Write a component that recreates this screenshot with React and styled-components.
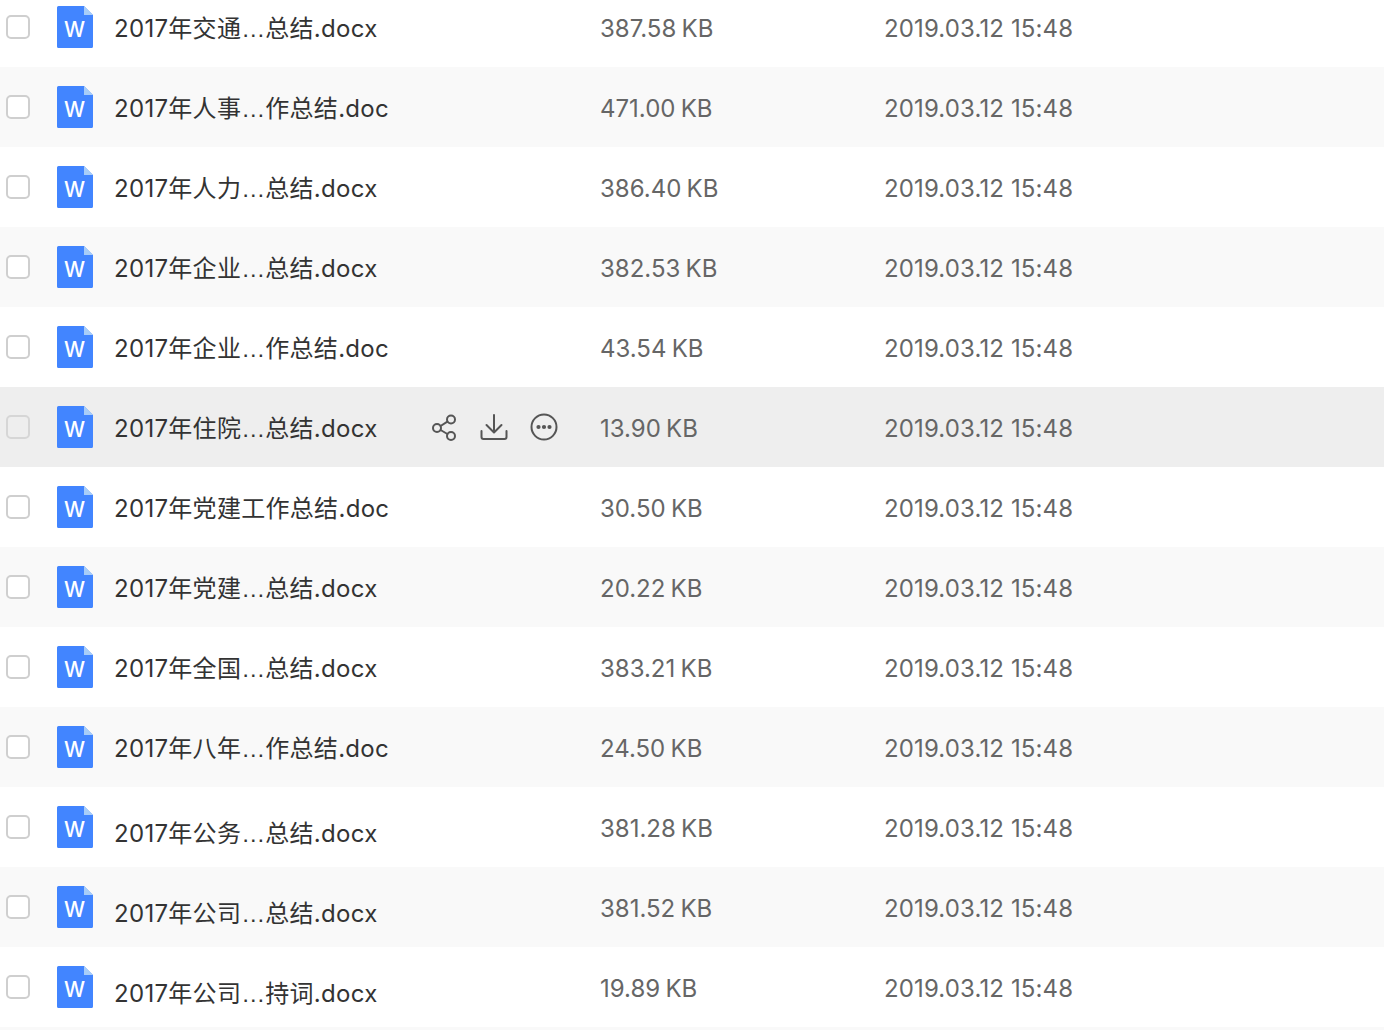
import React from "react";
import styled, { createGlobalStyle } from "styled-components";

const Global = createGlobalStyle`
  html, body { margin: 0; padding: 0; background: #fff; height: 1030px; overflow: hidden; }
  body { font-family: Inter, "Noto Sans CJK SC", "Noto Sans", sans-serif; }
`;

const List = styled.ul`
  list-style: none;
  margin: -13px 0 0;
  padding: 0;
`;

const Row = styled.li`
  height: 80px;
  padding-left: 6px;
  display: grid;
  grid-template-columns: 51px 57px 316px 170px 284px 1fr;
  align-items: center;
  background: ${(p) => (p.$hover ? "#eeeeee" : p.$even ? "#f9f9f9" : "#ffffff")};
`;

const EndRow = styled.li`
  height: 3px;
  background: #f9f9f9;
`;

const Check = styled.span`
  width: 24px;
  height: 24px;
  box-sizing: border-box;
  border: 2px solid ${(p) => (p.$hover ? "#d6d6d6" : "#cfcfcf")};
  border-radius: 5px;
  background: ${(p) => (p.$hover ? "#eeeeee" : "#ffffff")};
`;

const Doc = styled.span`
  display: block;
  width: 36px;
  height: 42px;
`;

const DocLetter = styled.text`
  font-family: Inter, sans-serif;
  font-size: 21px;
  font-weight: 500;
  fill: #ffffff;
  text-anchor: middle;
`;

const Name = styled.span`
  font-size: 24px;
  line-height: 32px;
  color: #333333;
  letter-spacing: 0.3px;
  white-space: nowrap;
  padding-top: ${(p) => (p.$low ? "14px" : "4px")};
`;

const Dots = styled.span`
  font-family: "Liberation Sans", sans-serif;
  letter-spacing: 0;
`;

const Actions = styled.span`
  display: flex;
  align-items: center;
  gap: 22px;
`;

const Action = styled.svg`
  display: block;
  width: 28px;
  height: 28px;
  fill: none;
  stroke: #555555;
  stroke-width: 2;
  stroke-linecap: round;
  stroke-linejoin: round;
`;

const Size = styled.span`
  font-size: 24px;
  line-height: 32px;
  color: #666666;
  white-space: nowrap;
  word-spacing: -1.5px;
  padding-top: 4px;
`;

const Modified = styled.span`
  font-size: 24px;
  line-height: 32px;
  color: #666666;
  white-space: nowrap;
  letter-spacing: 0.13px;
  padding-top: 4px;
`;

const WordIcon = () => (
  <Doc>
    <svg width="36" height="42" viewBox="0 0 36 42">
      <path d="M1.5 0H27L36 9V40.5A1.5 1.5 0 0 1 34.5 42H1.5A1.5 1.5 0 0 1 0 40.5V1.5A1.5 1.5 0 0 1 1.5 0Z" fill="#4285ff" />
      <path d="M27 0L36 9H27Z" fill="#a8cdf8" />
      <DocLetter x="17.5" y="31">W</DocLetter>
    </svg>
  </Doc>
);

const ActionIcons = () => (
  <Actions>
    <Action viewBox="0 0 28 28">
      <circle cx="21" cy="6.5" r="4" />
      <circle cx="21" cy="23" r="4" />
      <circle cx="7" cy="15" r="4" />
      <path d="M10.6 13L17.4 8.6M10.6 17L17.4 21" />
    </Action>
    <Action viewBox="0 0 28 28">
      <path d="M14 2V19M6.5 12L14 19.5L21.5 12M1.5 18V24A2 2 0 0 0 3.5 26H24.5A2 2 0 0 0 26.5 24V18" />
    </Action>
    <Action viewBox="0 0 28 28">
      <circle cx="14" cy="14" r="12.5" />
      <circle cx="8.5" cy="14" r="1.1" fill="#555555" />
      <circle cx="14" cy="14" r="1.1" fill="#555555" />
      <circle cx="19.5" cy="14" r="1.1" fill="#555555" />
    </Action>
  </Actions>
);

const files = [
  ["2017年交通", "总结.docx", "387.58 KB"],
  ["2017年人事", "作总结.doc", "471.00 KB"],
  ["2017年人力", "总结.docx", "386.40 KB"],
  ["2017年企业", "总结.docx", "382.53 KB"],
  ["2017年企业", "作总结.doc", "43.54 KB"],
  ["2017年住院", "总结.docx", "13.90 KB"],
  ["2017年党建工作总结.doc", "", "30.50 KB"],
  ["2017年党建", "总结.docx", "20.22 KB"],
  ["2017年全国", "总结.docx", "383.21 KB"],
  ["2017年八年", "作总结.doc", "24.50 KB"],
  ["2017年公务", "总结.docx", "381.28 KB"],
  ["2017年公司", "总结.docx", "381.52 KB"],
  ["2017年公司", "持词.docx", "19.89 KB"],
];

export default function App() {
  return (
    <>
      <Global />
      <List>
        {files.map(([head, tail, size], i) => {
          const hover = i === 5;
          return (
            <Row key={i} $even={i % 2 === 1} $hover={hover}>
              <Check $hover={hover} />
              <WordIcon />
              <Name $low={i >= 10}>
                {head}
                {tail && <Dots>…</Dots>}
                {tail}
              </Name>
              <span>{hover && <ActionIcons />}</span>
              <Size>{size}</Size>
              <Modified>2019.03.12 15:48</Modified>
            </Row>
          );
        })}
        <EndRow />
      </List>
    </>
  );
}
